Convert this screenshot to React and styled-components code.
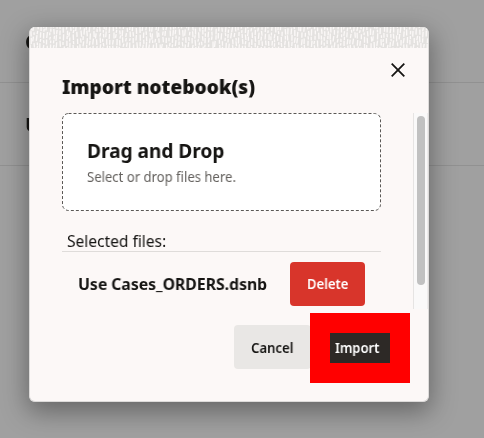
import React from 'react';
import styled, { createGlobalStyle } from 'styled-components';

const Global = createGlobalStyle`
  * { box-sizing: border-box; }
  html, body { margin: 0; height: 100%; overflow: hidden; }
  body { font-family: "Noto Sans", "Open Sans", sans-serif; color: #161513; }
`;

const Page = styled.div`
  position: relative;
  width: 484px;
  height: 438px;
  overflow: hidden;
  background: #a0a0a0;
`;

const ListRow = styled.div`
  height: 83px;
  padding: 28px 0 0 25px;
  border-bottom: 1px solid #919191;
  font-size: 20px;
  line-height: 28px;
  font-weight: 700;
`;

const Dialog = styled.section`
  position: absolute;
  left: 29px;
  top: 27px;
  width: 400px;
  height: 375px;
  display: flex;
  flex-direction: column;
  overflow: hidden;
  border: 1px solid #dddbda;
  border-top: 0;
  border-radius: 6px;
  background: #fcf8f7;
`;

const Shadow = styled.div`
  position: absolute;
  left: 29px;
  top: 27px;
  width: 400px;
  height: 375px;
  border-radius: 6px;
  box-shadow: 0 8px 26px 2px rgba(0, 0, 0, 0.36);
`;

const Texture = styled.svg`
  display: block;
  flex: none;
  width: 398px;
  height: 21px;
  background: #e4e2e0;
`;

const Header = styled.header`
  display: flex;
  flex: none;
  justify-content: space-between;
  height: 65px;
  padding: 0 22px 0 32px;
`;

const Fit = styled.span`
  display: inline-block;
  white-space: nowrap;
  transform: scaleX(${(p) => p.$x || 1});
  transform-origin: left center;
  will-change: transform;
`;

const Title = styled.h1`
  margin: 25px 0 0;
  font-size: 20px;
  line-height: 28px;
  font-weight: 900;
`;

const Close = styled.button`
  width: 16px;
  height: 16px;
  margin: 14px 0 0;
  padding: 0;
  border: 0;
  background: none;
  svg { display: block; }
`;

const Scroller = styled.div`
  display: flex;
  flex: none;
  justify-content: space-between;
  height: 196px;
  padding-left: 32px;
`;

const Content = styled.div`
  width: 320px;
`;

const DropZone = styled.div`
  position: relative;
  width: 319px;
  height: 98px;
  padding: 24px 0 0 25px;
  border-radius: 6px;
  background: #fff;
`;

const DashedFrame = styled.svg`
  position: absolute;
  inset: 0;
`;

const DropTitle = styled.h2`
  margin: 0;
  font-size: 20px;
  line-height: 28px;
  font-weight: 700;
`;

const Hint = styled.p`
  margin: 2px 0 0;
  font-size: 13.5px;
  line-height: 20px;
  color: #65625f;
`;

const SelectedLabel = styled.div`
  height: 41px;
  margin-right: 1px;
  padding: 20px 0 0 5px;
  border-bottom: 1px solid #dfdcda;
  font-size: 16px;
  line-height: 20px;
`;

const FileRow = styled.div`
  display: flex;
  justify-content: space-between;
  padding: 10px 17px 0 16px;
`;

const FileName = styled.div`
  width: 200px;
  font-size: 16px;
  line-height: 44px;
  font-weight: 700;
`;

const Button = styled.button`
  flex: none;
  width: ${(p) => (p.$danger ? 75 : 77)}px;
  height: 44px;
  padding: ${(p) => (p.$danger ? 0 : 2)}px 0 0 17px;
  border: 0;
  border-radius: 4px;
  background: ${(p) => (p.$danger ? '#d8352b' : '#e9e7e5')};
  color: ${(p) => (p.$danger ? '#fff' : '#161513')};
  font: 600 14px/42px "Noto Sans", sans-serif;
  text-align: left;
`;

const Track = styled.div`
  width: 15px;
  padding: 3px 0 0 3px;
  border-left: 1px solid #e6e4e3;
  border-right: 1px solid #eeecec;
  background: #faf9f9;
`;

const Thumb = styled.div`
  width: 8px;
  height: 169px;
  border-radius: 4px;
  background: #c1c1c1;
`;

const Footer = styled.footer`
  display: flex;
  justify-content: flex-end;
  padding: 4px 18px 0 0;
`;

const CancelSlot = styled.div`
  width: 76px;
  padding-top: 12px;
`;

const Highlight = styled.div`
  width: 100px;
  height: 70px;
  padding: 20px;
  background: #f00;
  z-index: 1;
`;

const ImportButton = styled.button`
  display: block;
  width: 60px;
  height: 30px;
  padding: 0 0 0 5px;
  border: 0;
  background: #2d2926;
  color: #fff;
  font: 600 14px/30px "Noto Sans", sans-serif;
  text-align: left;
`;

function buildStrokes() {
  let seed = 17;
  const rand = () => {
    seed = (seed * 16807) % 2147483647;
    return seed / 2147483647;
  };
  const parts = [];
  for (let x = 0; x < 400; x += 3.3) {
    let y = -5 * rand();
    while (y < 22) {
      const length = 2.5 + rand() * 4;
      const slant = (rand() - 0.6) * 1.4;
      const sx = x + rand() * 1.6;
      parts.push(`M${sx.toFixed(1)} ${y.toFixed(1)}l${slant.toFixed(1)} ${length.toFixed(1)}`);
      y += length + 0.6 + rand() * 1.2;
    }
  }
  return parts.join('');
}

const strokes = buildStrokes();

export default function App() {
  return (
    <>
      <Global />
      <Page>
        <ListRow><Fit>C</Fit></ListRow>
        <ListRow><Fit>U</Fit></ListRow>
        <Shadow />
        <Dialog>
          <Texture viewBox="0 0 398 21">
            <path d={strokes} stroke="#fbf8f7" strokeWidth="1.35" fill="none" />
          </Texture>
          <Header>
            <Title><Fit $x={0.955}>Import notebook(s)</Fit></Title>
            <Close aria-label="Close">
              <svg width="16" height="16" viewBox="0 0 16 16">
                <path d="M1.7 1.7L14.3 14.3M14.3 1.7L1.7 14.3" stroke="#161513" strokeWidth="1.8" />
              </svg>
            </Close>
          </Header>
          <Scroller>
            <Content>
              <DropZone>
                <DashedFrame width="319" height="98">
                  <rect x="0.5" y="0.5" width="318" height="97" rx="6" fill="none" stroke="#5b5855" strokeDasharray="3 2" />
                </DashedFrame>
                <DropTitle><Fit $x={0.953}>Drag and Drop</Fit></DropTitle>
                <Hint><Fit $x={0.97}>Select or drop files here.</Fit></Hint>
              </DropZone>
              <SelectedLabel><Fit $x={0.97}>Selected files:</Fit></SelectedLabel>
              <FileRow>
                <FileName><Fit $x={0.984}>Use Cases_ORDERS.dsnb</Fit></FileName>
                <Button $danger><Fit $x={0.93}>Delete</Fit></Button>
              </FileRow>
            </Content>
            <Track><Thumb /></Track>
          </Scroller>
          <Footer>
            <CancelSlot><Button><Fit $x={0.94}>Cancel</Fit></Button></CancelSlot>
            <Highlight>
              <ImportButton><Fit $x={0.93}>Import</Fit></ImportButton>
            </Highlight>
          </Footer>
        </Dialog>
      </Page>
    </>
  );
}
